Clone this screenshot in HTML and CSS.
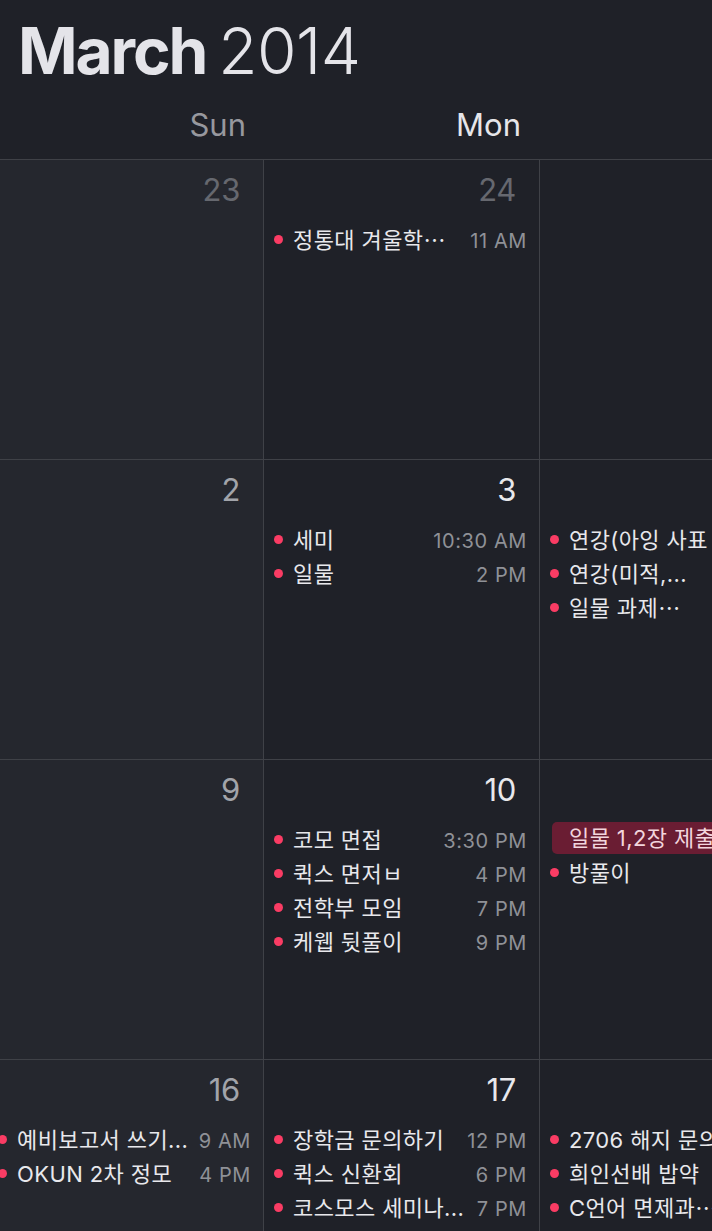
FILE: index.html
```html
<!DOCTYPE html>
<html lang="ko">
<head>
<meta charset="utf-8">
<title>March 2014</title>
<link rel="stylesheet" href="styles.css">
</head>
<body>
<div class="page">
  <header class="top">
    <h1 class="title"><span class="month">March</span> <span class="year">2014</span></h1>
    <div class="weekdays">
      <div class="wd sun">Sun</div>
      <div class="wd mon">Mon</div>
      <div class="wd"></div>
    </div>
  </header>

  <div class="grid">
    <!-- week 1 -->
    <div class="cell sun-col"><div class="num other">23</div></div>
    <div class="cell"><div class="num other">24</div>
      <div class="events">
        <div class="ev"><span class="dot"></span><span class="t">정통대 겨울학⋯</span><span class="time">11 AM</span></div>
      </div>
    </div>
    <div class="cell"><div class="num"></div></div>

    <!-- week 2 -->
    <div class="cell sun-col"><div class="num sunday">2</div></div>
    <div class="cell"><div class="num">3</div>
      <div class="events">
        <div class="ev"><span class="dot"></span><span class="t">세미</span><span class="time">10:30 AM</span></div>
        <div class="ev"><span class="dot"></span><span class="t">일물</span><span class="time">2 PM</span></div>
      </div>
    </div>
    <div class="cell"><div class="num"></div>
      <div class="events">
        <div class="ev"><span class="dot"></span><span class="t">연강(아잉 사표 제출)</span></div>
        <div class="ev"><span class="dot"></span><span class="t">연강(미적,...</span></div>
        <div class="ev"><span class="dot"></span><span class="t">일물 과제⋯</span></div>
      </div>
    </div>

    <!-- week 3 -->
    <div class="cell sun-col"><div class="num sunday">9</div></div>
    <div class="cell"><div class="num">10</div>
      <div class="events">
        <div class="ev"><span class="dot"></span><span class="t">코모 면접</span><span class="time">3:30 PM</span></div>
        <div class="ev"><span class="dot"></span><span class="t">퀵스 면저ㅂ</span><span class="time">4 PM</span></div>
        <div class="ev"><span class="dot"></span><span class="t">전학부 모임</span><span class="time">7 PM</span></div>
        <div class="ev"><span class="dot"></span><span class="t">케웹 뒷풀이</span><span class="time">9 PM</span></div>
      </div>
    </div>
    <div class="cell"><div class="num"></div>
      <div class="events">
        <div class="ev hl"><span class="t">일물 1,2장 제출하기</span></div>
        <div class="ev"><span class="dot"></span><span class="t">방풀이</span></div>
      </div>
    </div>

    <!-- week 4 -->
    <div class="cell sun-col"><div class="num sunday">16</div>
      <div class="events">
        <div class="ev"><span class="dot"></span><span class="t">예비보고서 쓰기...</span><span class="time">9 AM</span></div>
        <div class="ev"><span class="dot"></span><span class="t">OKUN 2차 정모</span><span class="time">4 PM</span></div>
      </div>
    </div>
    <div class="cell"><div class="num">17</div>
      <div class="events">
        <div class="ev"><span class="dot"></span><span class="t">장학금 문의하기</span><span class="time">12 PM</span></div>
        <div class="ev"><span class="dot"></span><span class="t">퀵스 신환회</span><span class="time">6 PM</span></div>
        <div class="ev"><span class="dot"></span><span class="t">코스모스 세미나...</span><span class="time">7 PM</span></div>
      </div>
    </div>
    <div class="cell"><div class="num"></div>
      <div class="events">
        <div class="ev"><span class="dot"></span><span class="t">2706 해지 문의하기</span></div>
        <div class="ev"><span class="dot"></span><span class="t">희인선배 밥약</span></div>
        <div class="ev"><span class="dot"></span><span class="t">C언어 면제과⋯</span></div>
        <div class="ev"><span class="dot"></span><span class="t">다이어트 시작</span></div>
      </div>
    </div>
  </div>
</div>
</body>
</html>
```

FILE: styles.css
```css
html, body {
  margin: 0;
  padding: 0;
  background: #1f2128;
  overflow: hidden;
}

body {
  width: 712px;
  height: 1231px;
  font-family: Inter, "Noto Sans CJK KR", sans-serif;
  color: #e6e6ea;
}

.page {
  width: 712px;
  height: 1231px;
  overflow: hidden;
}

.top {
  height: 159px;
  box-sizing: border-box;
  padding-top: 19px;
  background: #1f2128;
}

.title {
  margin: 0 0 0 18px;
  font-size: 64px;
  line-height: 64px;
  font-weight: 400;
  color: #e4e4e9;
  white-space: nowrap;
  word-spacing: -6px;
}

.month {
  font-weight: 700;
  letter-spacing: -2.1px;
}

.year {
  font-weight: 300;
  letter-spacing: -0.5px;
}

.weekdays {
  display: grid;
  grid-template-columns: 276px 276px 276px;
  margin-left: -12px;
  margin-top: 26px;
}

.wd {
  font-size: 31px;
  line-height: 31px;
  text-align: right;
  padding-right: 19px;
  color: #e6e6ea;
}

.wd.sun {
  color: #97989e;
  padding-right: 18px;
}

.grid {
  display: grid;
  grid-template-columns: 276px 276px 276px;
  grid-auto-rows: 300px;
  margin-left: -12px;
}

.cell {
  box-sizing: border-box;
  border-top: 1px solid #3f4147;
  border-right: 1px solid #3f4147;
  background: #1f2128;
  padding-top: 12px;
  overflow: hidden;
}

.cell.sun-col {
  background: #25272e;
}

.num {
  height: 36px;
  font-size: 31px;
  line-height: 36px;
  text-align: right;
  padding-right: 23px;
  color: #e8e8ec;
  letter-spacing: -0.3px;
}

.num.other {
  color: #66686f;
}

.num.sunday {
  color: #a2a4aa;
}

.events {
  margin-top: 14px;
}

.ev {
  display: flex;
  align-items: baseline;
  box-sizing: border-box;
  height: 34px;
  padding: 2px 12px 0 10px;
  line-height: 32px;
  white-space: nowrap;
}

.dot {
  flex: none;
  align-self: center;
  width: 9px;
  height: 9px;
  border-radius: 50%;
  background: #fa3c64;
  margin: 0 10px 2px 0;
}

.t {
  flex: 1 1 auto;
  min-width: 0;
  font-size: 22px;
  letter-spacing: 0.4px;
  color: #e8e8ec;
  white-space: nowrap;
}

.time {
  flex: none;
  margin-left: 8px;
  font-size: 20px;
  color: #8f9197;
  letter-spacing: 0.6px;
}

.ev.hl {
  height: 32px;
  padding-top: 1px;
  line-height: 31px;
  margin: 1px 0 1px 12px;
  padding-left: 17px;
  background: #6a1d33;
  border-radius: 5px 0 0 5px;
}

.ev.hl .t {
  color: #f2d5dd;
}
```
